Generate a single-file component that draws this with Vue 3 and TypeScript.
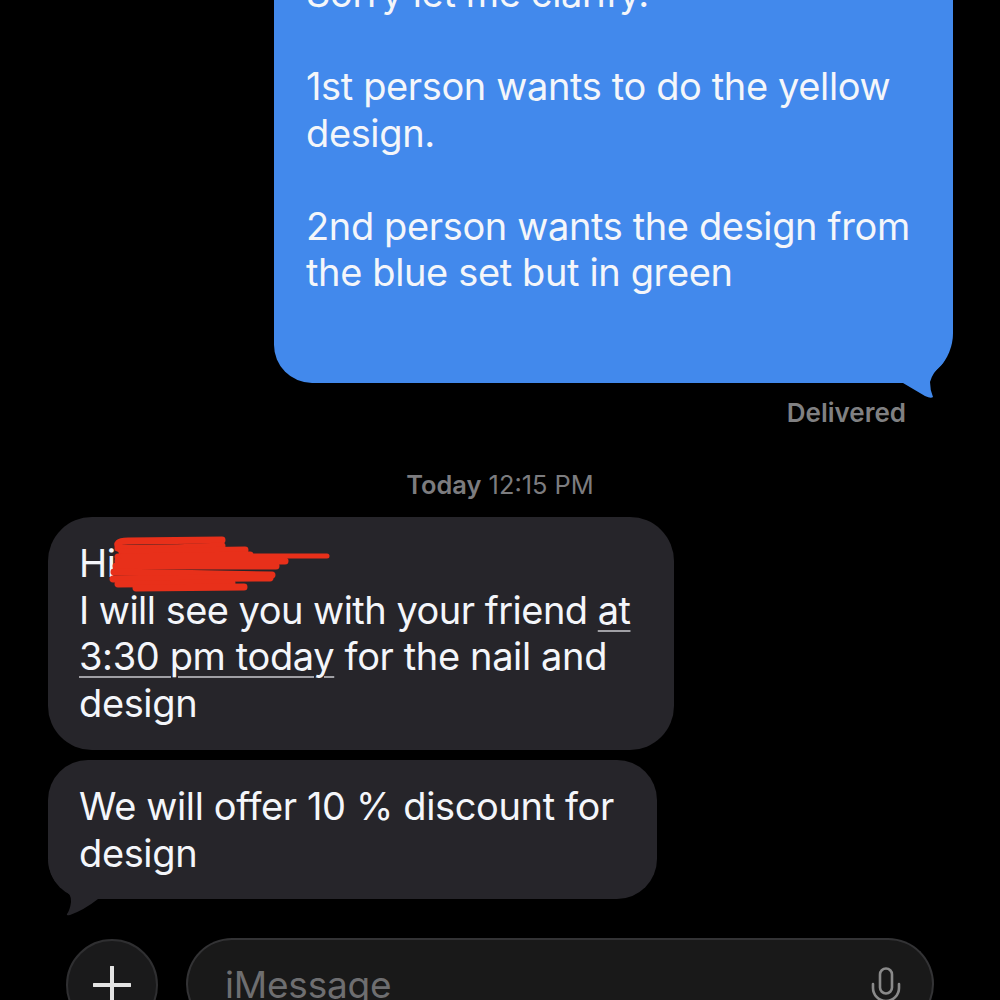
<script setup lang="ts">
const strokes: string[] = [
  'M120 549 Q113 541 128 541 L222 540',
  'M118 548 Q160 549 222 546',
  'M122 552 L245 550',
  'M118 557 L250 555',
  'M118 561 L285 561',
  'M116 566 L276 566',
  'M114 572 L272 575',
  'M113 579 L270 578',
  'M118 584 L232 583',
  'M136 588 L244 587',
]
</script>

<template>
  <div class="screen">
    <div class="thread">
      <div class="sent-row">
        <div class="bubble sent">
          <svg class="tail sent-tail" width="53" height="70" viewBox="0 0 53 70">
            <path d="M0 0 L53 0 Q51 20 43 33 Q32 43 30 52 Q30 60 33 67 Q31 69 25 66 L3 53 L0 53 Z" fill="#4289ec" />
          </svg>
          <span class="text">
            Sorry let me clarify.<br /><br />
            1st person wants to do the yellow<br />design.<br /><br />
            2nd person wants the design from<br />the blue set but in green
          </span>
        </div>
      </div>
      <div class="delivered">Delivered</div>
      <div class="stamp"><b>Today</b> 12:15 PM</div>
      <div class="received-list">
        <div class="bubble received first">
          <span class="text">
            Hi<br />
            <span class="tight">I will see you with your friend <span class="link">at</span></span><br />
            <span class="link">3:30 pm today</span> for the nail and<br />
            design
          </span>
          <svg class="scribble" width="230" height="60" viewBox="120 535 230 60">
            <path v-for="(d, i) in strokes" :key="i" :d="d" class="scribble-fill" />
            <path d="M122 556 L327 556" class="scribble-line" />
          </svg>
        </div>
        <div class="bubble received second">
          <svg class="tail recv-tail" width="50" height="56" viewBox="0 0 50 56">
            <path d="M0 0 Q2 20 14 28 Q24 34 23 42 Q22 50 19 54 Q18 56 22 55 Q36 50 50 39 L50 0 Z" fill="#26252a" />
          </svg>
          <span class="text">We will offer 10 % discount for<br />design</span>
        </div>
      </div>
    </div>
    <div class="composer">
      <button class="plus" type="button" aria-label="Add">
        <svg width="38" height="38" viewBox="0 0 38 38">
          <path d="M19 1 V37 M1 19 H37" stroke="#e4e4e4" stroke-width="4" stroke-linecap="round" fill="none" />
        </svg>
      </button>
      <div class="field">
        <span class="placeholder">iMessage</span>
        <svg class="mic" width="30" height="40" viewBox="0 0 30 40">
          <rect x="9" y="1.5" width="12" height="25" rx="6" fill="none" stroke="#8a8a8a" stroke-width="2.6" />
          <path d="M2 17 V21 A13 13 0 0 0 28 21 V17" fill="none" stroke="#8a8a8a" stroke-width="2.6" stroke-linecap="round" />
        </svg>
      </div>
    </div>
  </div>
</template>

<style>
html, body { margin: 0; background: #000; }
</style>

<style scoped>
.screen {
  width: 1000px;
  height: 1000px;
  overflow: hidden;
  background: #000;
  font-family: Inter, "Liberation Sans", sans-serif;
  box-sizing: border-box;
}
.thread {
  display: flex;
  flex-direction: column;
}
.sent-row {
  display: flex;
  justify-content: flex-end;
  padding-right: 47px;
  margin-top: -50px;
}
.bubble {
  position: relative;
  font-size: 38px;
  line-height: 46.5px;
  letter-spacing: -0.37px;
  color: #f4f6fa;
  white-space: nowrap;
  box-sizing: border-box;
}
.text { position: relative; }
.tight { letter-spacing: -0.52px; }
.sent {
  width: 679px;
  height: 433px;
  background: #4289ec;
  border-radius: 0 0 50px 38px;
  padding: 20px 0 0 32px;
}
.tail { position: absolute; }
.sent-tail {
  right: 0;
  bottom: -17px;
}
.delivered {
  align-self: flex-end;
  margin: 14px 94px 0 0;
  font-size: 26px;
  line-height: 32px;
  font-weight: 600;
  color: #808082;
}
.stamp {
  align-self: center;
  margin-top: 40px;
  font-size: 25.4px;
  line-height: 32px;
  color: #7c7c7f;
}
.stamp b { font-weight: 600; }
.received-list {
  display: flex;
  flex-direction: column;
  align-items: flex-start;
  gap: 10px;
  margin: 16px 0 0 48px;
}
.received {
  background: #26252a;
  border-radius: 44px;
  padding-left: 31px;
}
.first { width: 626px; height: 233px; padding-top: 23px; }
.second { width: 609px; height: 139px; padding-top: 23px; border-radius: 40px; }
.link {
  text-decoration: underline;
  text-decoration-color: #a0a0a5;
  text-decoration-thickness: 2px;
  text-underline-offset: 6px;
}
.scribble {
  position: absolute;
  left: 72px;
  top: 18px;
  overflow: visible;
}
.scribble-fill {
  fill: none;
  stroke: #e8301a;
  stroke-width: 7;
  stroke-linecap: round;
}
.scribble-line {
  fill: none;
  stroke: #e8301a;
  stroke-width: 5;
  stroke-linecap: round;
}
.recv-tail { left: 0; bottom: -17px; }
.composer {
  display: flex;
  align-items: flex-start;
  gap: 28px;
  margin: 40px 66px 0;
}
.plus {
  flex: none;
  width: 92px;
  height: 92px;
  border-radius: 50%;
  border: 2px solid #2f2f31;
  background: #1a1a1b;
  padding: 0;
  display: flex;
  align-items: center;
  justify-content: center;
}
.field {
  flex: 1;
  height: 92px;
  margin-top: -1px;
  border: 2px solid #333335;
  border-bottom-color: #1a1a1a;
  border-radius: 46px;
  background: #191919;
  box-sizing: border-box;
  display: flex;
  justify-content: space-between;
  padding: 22px 31px 0 37px;
}
.placeholder {
  font-size: 37px;
  line-height: 46px;
  letter-spacing: -0.2px;
  color: #6e6e70;
}
.mic { margin-top: 5px; }
</style>
